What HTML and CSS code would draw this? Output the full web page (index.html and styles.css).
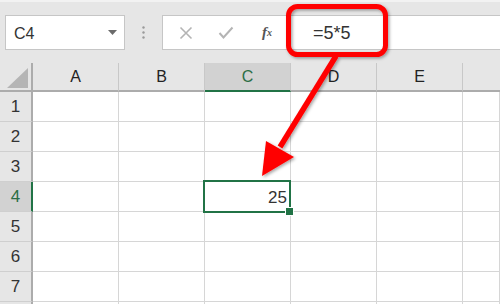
FILE: index.html
```html
<!DOCTYPE html>
<html>
<head>
<meta charset="utf-8">
<link rel="stylesheet" href="styles.css">
</head>
<body>
<div class="app">
  <div class="toolbar">
    <div class="namebox">
      <span class="name">C4</span>
      <svg class="dd" width="9" height="5" viewBox="0 0 9 5"><path d="M0 0H9L4.5 5Z" fill="#6b6b6b"/></svg>
    </div>
    <div class="dots">
      <svg width="3" height="13" viewBox="0 0 3 13"><circle cx="1.5" cy="1.5" r="1.2" fill="#9a9a9a"/><circle cx="1.5" cy="6.5" r="1.2" fill="#9a9a9a"/><circle cx="1.5" cy="11.5" r="1.2" fill="#9a9a9a"/></svg>
    </div>
    <div class="fbar">
      <span class="ico cancel"><svg width="14" height="14" viewBox="0 0 14 14"><path d="M1.5 1.5L12.5 12.5M12.5 1.5L1.5 12.5" stroke="#b4b4b4" stroke-width="1.6" fill="none"/></svg></span>
      <span class="ico enter"><svg width="16" height="13" viewBox="0 0 16 13"><path d="M1.5 7L5.5 11.5L14.5 1.5" stroke="#b4b4b4" stroke-width="2" fill="none"/></svg></span>
      <span class="ico fx">f<sub>x</sub></span>
      <div class="finput">=5*5</div>
    </div>
  </div>
  <div class="sheet">
    <div class="corner"><svg width="21" height="20" viewBox="0 0 21 20"><path d="M21 0V20H0Z" fill="#b5b5b5"/></svg></div>
    <div class="ch">A</div>
    <div class="ch">B</div>
    <div class="ch sel">C</div>
    <div class="ch">D</div>
    <div class="ch">E</div>
    <div class="ch last"></div>

    <div class="rh">1</div><div class="c"></div><div class="c"></div><div class="c"></div><div class="c"></div><div class="c"></div><div class="c"></div>
    <div class="rh">2</div><div class="c"></div><div class="c"></div><div class="c"></div><div class="c"></div><div class="c"></div><div class="c"></div>
    <div class="rh">3</div><div class="c"></div><div class="c"></div><div class="c"></div><div class="c"></div><div class="c"></div><div class="c"></div>
    <div class="rh sel">4</div><div class="c"></div><div class="c"></div><div class="c active">25</div><div class="c"></div><div class="c"></div><div class="c"></div>
    <div class="rh">5</div><div class="c"></div><div class="c"></div><div class="c"></div><div class="c"></div><div class="c"></div><div class="c"></div>
    <div class="rh">6</div><div class="c"></div><div class="c"></div><div class="c"></div><div class="c"></div><div class="c"></div><div class="c"></div>
    <div class="rh">7</div><div class="c"></div><div class="c"></div><div class="c"></div><div class="c"></div><div class="c"></div><div class="c"></div>
    <div class="rh"></div><div class="c"></div><div class="c"></div><div class="c"></div><div class="c"></div><div class="c"></div><div class="c"></div>
  </div>
  <svg class="annot" width="500" height="304" viewBox="0 0 500 304">
    <defs>
      <filter id="sh" x="-20%" y="-20%" width="140%" height="140%">
        <feDropShadow dx="1.5" dy="1.5" stdDeviation="1.5" flood-color="#000" flood-opacity="0.35"/>
      </filter>
    </defs>
    <g filter="url(#sh)">
      <rect x="288.5" y="6.5" width="97" height="48" rx="9" ry="9" fill="none" stroke="#ff0000" stroke-width="5"/>
      <path d="M336 56L280 147" stroke="#ff0000" stroke-width="5.5" fill="none"/>
      <path d="M262 176L266 141L294 157Z" fill="#ff0000"/>
    </g>
  </svg>
</div>
</body>
</html>
```
FILE: styles.css
```css
* { box-sizing: border-box; }
html, body { margin: 0; padding: 0; }
body {
  width: 500px;
  height: 304px;
  overflow: hidden;
  background: #e6e6e6;
  font-family: "Liberation Sans", Arial, sans-serif;
}
.app {
  position: relative;
  width: 500px;
  height: 304px;
  overflow: hidden;
}
.toolbar {
  height: 63px;
  border-top: 2px solid #f2f2f2;
  padding-top: 13px;
  display: flex;
  align-items: flex-start;
  background: #e6e6e6;
}
.namebox {
  margin-left: 5px;
  width: 120px;
  height: 35px;
  background: #fff;
  border: 1px solid #c6c6c6;
  display: flex;
  align-items: center;
  justify-content: space-between;
  padding: 0 7px 0 8px;
}
.name {
  font-size: 16px;
  color: #333;
  padding-top: 3px;
}
.dd { margin-top: -1px; }
.dots {
  width: 37px;
  height: 35px;
  display: flex;
  align-items: center;
  justify-content: center;
}
.fbar {
  flex: 1;
  height: 35px;
  background: #fff;
  border: 1px solid #c6c6c6;
  border-right: none;
  display: flex;
  align-items: center;
}
.ico {
  display: flex;
  align-items: center;
  justify-content: center;
}
.cancel { margin-left: 16px; width: 14px; }
.enter { margin-left: 25px; width: 16px; }
.fx {
  margin-left: 28px;
  font-family: "Liberation Serif", "Times New Roman", serif;
  font-style: italic;
  font-weight: bold;
  font-size: 15px;
  color: #555;
}
.fx sub {
  font-size: 10px;
  vertical-align: -1px;
}
.finput {
  margin-left: 41px;
  font-size: 18px;
  color: #333;
  padding-top: 2px;
}
.sheet {
  display: grid;
  grid-template-columns: 33px repeat(5, 86px) 1fr;
  grid-template-rows: 29px repeat(8, 30px);
  background: #fff;
}
.corner {
  background: #e6e6e6;
  border-right: 2px solid #acacac;
  border-bottom: 2px solid #acacac;
  display: flex;
  align-items: flex-end;
  justify-content: flex-end;
  padding: 0 3px 2px 0;
}
.ch {
  background: #e6e6e6;
  border-right: 1px solid #c8c8c8;
  border-bottom: 2px solid #acacac;
  display: flex;
  align-items: center;
  justify-content: center;
  font-size: 16px;
  color: #222;
  padding-top: 1px;
}
.ch.sel {
  background: #d2d2d2;
  border-bottom-color: #217346;
  color: #2b6d45;
}
.ch.last { border-right: none; }
.rh {
  background: #e6e6e6;
  border-right: 2px solid #acacac;
  border-bottom: 1px solid #cfcfcf;
  display: flex;
  align-items: center;
  justify-content: center;
  font-size: 17px;
  color: #333;
}
.rh.sel {
  background: #d2d2d2;
  border-right-color: #217346;
  color: #2b6d45;
}
.c {
  border-right: 1px solid #d6d6d6;
  border-bottom: 1px solid #d6d6d6;
}
.c.active {
  position: relative;
  display: flex;
  align-items: center;
  justify-content: flex-end;
  padding-right: 3px;
  padding-top: 2px;
  font-size: 17px;
  color: #333;
}
.c.active::before {
  content: "";
  position: absolute;
  left: -2px;
  top: -2px;
  right: -1px;
  bottom: -2px;
  border: 2px solid #217346;
  z-index: 1;
}
.c.active::after {
  content: "";
  position: absolute;
  right: -4px;
  bottom: -5px;
  width: 7px;
  height: 7px;
  background: #217346;
  border: 1px solid #fff;
  z-index: 2;
}
.annot {
  position: absolute;
  left: 0;
  top: 0;
  pointer-events: none;
}
```
